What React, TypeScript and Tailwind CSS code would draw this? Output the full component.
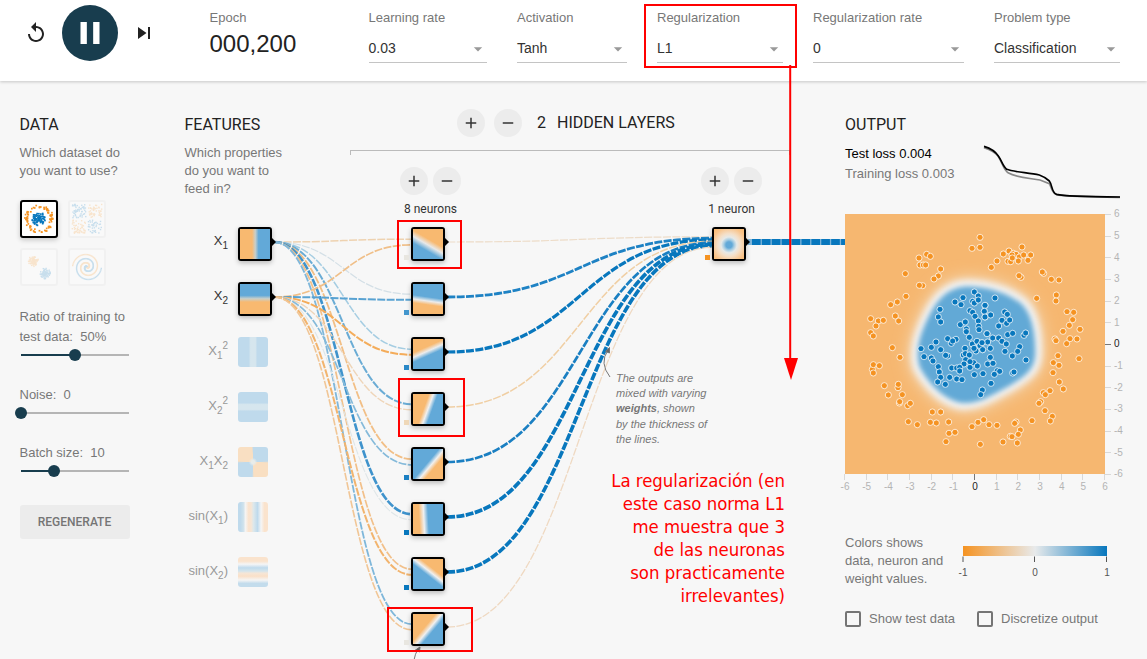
import React from "react";
import { MdReplay, MdPause, MdSkipNext, MdAdd, MdRemove, MdArrowDropDown } from "react-icons/md";

/* ---------- deterministic scatter for the dataset thumbnails ---------- */
function makeRandom(seed: number) {
  let s = seed;
  return () => {
    s = (s * 16807) % 2147483647;
    return s / 2147483647;
  };
}

const ORANGE = "#f59322";
const BLUE = "#0877bd";

type Dot = [number, number, string];

function circleDots(): Dot[] {
  const r = makeRandom(11);
  const out: Dot[] = [];
  for (let i = 0; i < 80; i++) {
    const a = r() * Math.PI * 2;
    const d = 10.8 + r() * 3.6;
    out.push([17 + Math.cos(a) * d, 17 + Math.sin(a) * d, ORANGE]);
  }
  for (let i = 0; i < 80; i++) {
    const a = r() * Math.PI * 2;
    const d = r() * 6.8;
    out.push([17 + Math.cos(a) * d, 17 + Math.sin(a) * d, BLUE]);
  }
  return out;
}

function xorDots(): Dot[] {
  const r = makeRandom(29);
  const out: Dot[] = [];
  for (let i = 0; i < 190; i++) {
    const x = (r() - 0.5) * 27;
    const y = (r() - 0.5) * 27;
    out.push([17 + x + Math.sign(x) * 1.2, 17 + y + Math.sign(y) * 1.2, x * y > 0 ? BLUE : ORANGE]);
  }
  return out;
}

function gaussDots(): Dot[] {
  const r = makeRandom(5);
  const out: Dot[] = [];
  for (let i = 0; i < 170; i++) {
    const a = r() * Math.PI * 2;
    const d = r() * 5.4;
    const c = i < 85 ? 11.5 : 23.5;
    out.push([c + Math.cos(a) * d, c + Math.sin(a) * d, i < 85 ? ORANGE : BLUE]);
  }
  return out;
}

function spiralDots(): Dot[] {
  const out: Dot[] = [];
  for (let i = 0; i < 110; i++) {
    const t = (i / 110) * 1.75 * 2 * Math.PI;
    const d = (i / 110) * 14.5;
    out.push([17 + Math.sin(t) * d, 17 + Math.cos(t) * d, ORANGE]);
    out.push([17 - Math.sin(t) * d, 17 - Math.cos(t) * d, BLUE]);
  }
  return out;
}

function Dataset({ dots, active }: { dots: Dot[]; active?: boolean }) {
  const size = active ? 1.7 : 1.4;
  return (
    <div
      className={
        active
          ? "size-[38px] rounded-[3px] border-2 border-black bg-white shadow-[0_2px_5px_rgba(0,0,0,0.2)]"
          : "size-[38px] rounded-[3px] border-2 border-[#f1f1f1] bg-[#f9f9f9]"
      }
    >
      <svg viewBox="0 0 34 34" className={active ? "size-full" : "size-full opacity-20"}>
        {dots.map(([x, y, c], i) => (
          <rect key={i} x={x - size / 2} y={y - size / 2} width={size} height={size} fill={c} />
        ))}
      </svg>
    </div>
  );
}

/* ---------- header controls ---------- */
function Select({ label, value, width }: { label: string; value: string; width: string }) {
  return (
    <div className={`${width} shrink-0 pt-[10px]`}>
      <div className="text-[13px] leading-4 text-[#777]">{label}</div>
      <div className="mt-[9px] flex h-[28px] items-center justify-between border-b border-[#c4c4c4] text-[14px] text-[#333]">
        <span>{value}</span>
        <MdArrowDropDown size={20} className="-mr-px text-[#999]" />
      </div>
    </div>
  );
}

function RoundButton({ minus }: { minus?: boolean }) {
  return (
    <button className="flex size-7 items-center justify-center rounded-full bg-[#ececec] text-[#333]">
      {minus ? <MdRemove size={18} /> : <MdAdd size={18} />}
    </button>
  );
}

function Slider({ label, pct }: { label: React.ReactNode; pct: number }) {
  return (
    <div>
      <div className="text-[13px] leading-5 text-[#777]">{label}</div>
      <div className="relative ml-px mt-[2px] h-3 w-[108px]">
        <div className="absolute top-[5px] h-[2px] w-full bg-[#b5b5b5]" />
        <div className="absolute top-[5px] h-[2px] bg-[#183d4e]" style={{ width: `${pct}%` }} />
        <div className="absolute -ml-[6px] size-3 rounded-full bg-[#183d4e]" style={{ left: `${pct}%` }} />
      </div>
    </div>
  );
}

/* ---------- network ---------- */
const LEFT = 165;
const TOP = 82;
const rowY = (i: number) => 227 + 55 * i;

const features: { label: React.ReactNode; bg: string; active?: boolean }[] = [
  { label: <>X<sub>1</sub></>, active: true, bg: "bg-[linear-gradient(90deg,#f8b970_40%,#c9cfc9_51%,#62a9d8_62%)]" },
  { label: <>X<sub>2</sub></>, active: true, bg: "bg-[linear-gradient(180deg,#62a9d8_38%,#c9cfc9_49%,#f8b970_60%)]" },
  { label: <>X<sub>1</sub><sup>2</sup></>, bg: "bg-[linear-gradient(90deg,#bfdaec_36%,#d6e6ee_42%,#d6e6ee_58%,#bfdaec_64%)]" },
  { label: <>X<sub>2</sub><sup>2</sup></>, bg: "bg-[linear-gradient(180deg,#bfdaec_36%,#d6e6ee_42%,#d6e6ee_58%,#bfdaec_64%)]" },
  {
    label: <>X<sub>1</sub>X<sub>2</sub></>,
    bg: "bg-[radial-gradient(circle,#e8ecea_0_8%,transparent_20%),conic-gradient(#bfdaec_0_24%,#f9dfc2_26%_49%,#bfdaec_51%_74%,#f9dfc2_76%_99%,#bfdaec)]",
  },
  {
    label: <>sin(X<sub>1</sub>)</>,
    bg: "bg-[linear-gradient(90deg,#bfdaec_8%,#cfe2ec_18%,#f5f4f3_25%,#fae2cc_36%,#f6e6d6_44%,#dce8ec_52%,#bfdaec_65%,#f5f5f5_77%,#fae3cd_88%)]",
  },
  {
    label: <>sin(X<sub>2</sub>)</>,
    bg: "bg-[linear-gradient(180deg,#fae3cd_14%,#f5f5f5_24%,#bfdaec_36%,#d5e5ec_47%,#f6e6d6_54%,#fae0c8_64%,#f5f5f5_77%,#c3dcec_88%)]",
  },
];

const hiddenBg = [
  "bg-[linear-gradient(30deg,#62a9d8_34%,#e8e8e8_48%,#f8b970_61%)]",
  "bg-[linear-gradient(188deg,#62a9d8_44%,#ececec_56%,#f8b970_67%)]",
  "bg-[linear-gradient(156deg,#f8b970_32%,#ececec_43%,#62a9d8_54%)]",
  "bg-[linear-gradient(110deg,#f8b970_39%,#f0f0f0_50%,#62a9d8_61%)]",
  "bg-[linear-gradient(130deg,#62a9d8_47%,#f0f0f0_57%,#f8b970_67%)]",
  "bg-[linear-gradient(87deg,#f8b970_22%,#f0f0f0_37%,#62a9d8_51%)]",
  "bg-[linear-gradient(38deg,#62a9d8_47%,#f0f0f0_57%,#f8b970_67%)]",
  "bg-[linear-gradient(130deg,#f8b970_41%,#f0f0f0_52%,#62a9d8_62%)]",
];
const biasColor = ["#e8e6e0", "#4396cd", "#2a88c7", "#efd8b8", "#1b7fc2", "#0877bd", "#0877bd", "#e8e6e0"];

type Link = [string, number];
const fromX1: Link[] = [
  ["#eed2b0", 1.5], ["#d3dfe6", 1.2], ["#a5cde2", 1.5], ["#6aacd5", 2],
  ["#f2bf86", 1.8], ["#3f93cc", 2.6], ["#f2c08a", 1.7], ["#7fb7da", 1.8],
];
const fromX2: Link[] = [
  ["#f0bf88", 1.7], ["#58a2d2", 2], ["#f4ac5a", 2], ["#efd5b8", 1.4],
  ["#85bada", 1.7], ["#dfe6e8", 1.1], ["#f2b46e", 2], ["#f1c696", 1.6],
];
const toOut: Link[] = [
  ["#eddcc8", 1.2], ["#1e82c4", 2.8], ["#0877bd", 3.2], ["#f0cfa4", 1.5],
  ["#1a7fc2", 2.7], ["#0877bd", 3.7], ["#0877bd", 3.6], ["#efd9c2", 1.3],
];

function diagonal(x0: number, y0: number, x1: number, y1: number) {
  const m = (x0 + x1) / 2;
  return `M${x0},${y0}C${m},${y0} ${m},${y1} ${x1},${y1}`;
}

function Links() {
  return (
    <svg className="absolute inset-0" width="680" height="577" viewBox={`${LEFT} ${TOP} 680 577`} fill="none">
      <g strokeDasharray="8 1.4">
        {fromX1.map(([c, w], i) => (
          <path key={`a${i}`} d={diagonal(274, 242, 412, 239.2 + 55 * i)} stroke={c} strokeWidth={w} />
        ))}
        {fromX2.map(([c, w], i) => (
          <path key={`b${i}`} d={diagonal(274, 297, 412, 244.8 + 55 * i)} stroke={c} strokeWidth={w} />
        ))}
        {toOut.map(([c, w], i) => (
          <path key={`c${i}`} d={diagonal(447, 242 + 55 * i, 713, 242 + ((i - 3.5) / 8) * 12)} stroke={c} strokeWidth={w} />
        ))}
      </g>
      <path d="M748 242H846" stroke="#7db5da" strokeWidth="6" />
      <path d="M752 242H846" stroke={BLUE} strokeWidth="6" strokeDasharray="8.6 1.3" />
      <g stroke="#777" strokeWidth="1">
        <path d="M610 377Q599 363 608 350" />
        <path d="M605.5 351.5L609.5 347.5L609.5 353Z" fill="#666" />
        <path d="M414 660Q415 654 418 649" />
        <path d="M415.5 650L420 647L419.5 652Z" fill="#666" />
      </g>
    </svg>
  );
}

function Node({ x, y, bg, bias }: { x: number; y: number; bg: string; bias?: string }) {
  return (
    <div className="absolute" style={{ left: x - LEFT, top: y - TOP }}>
      {bias && <div className="absolute -left-[7px] top-[28px] size-[5px]" style={{ backgroundColor: bias }} />}
      <div className="size-[34px] rounded-[3px] border-2 border-black bg-black shadow-[0_2px_5px_rgba(0,0,0,0.25)]">
        <div className={`size-full ${bg}`} />
      </div>
      <svg className="absolute left-[33px] top-[11px]" width="5" height="8" viewBox="0 0 5 8">
        <path d="M0 0H1L5 4L1 8H0Z" fill="#000" />
      </svg>
    </div>
  );
}

function Network() {
  return (
    <section className="relative h-[577px] w-[680px] shrink-0">
      <div className="flex">
        <div className="w-[185px] shrink-0 pl-[19.5px] pt-[33px]">
          <h2 className="font-['Roboto'] text-[16px] leading-5 text-[#222]">FEATURES</h2>
          <p className="mt-[9px] w-[110px] text-[13px] leading-[18px] text-[#777]">Which properties do you want to feed in?</p>
        </div>
        <div className="w-[440px] shrink-0">
          <div className="flex items-center pl-[107px] pt-[27px]">
            <RoundButton />
            <div className="w-[9px]" />
            <RoundButton minus />
            <span className="ml-[15px] w-5 font-['Roboto'] text-[16px] leading-5 text-[#222]">2</span>
            <span className="font-['Roboto'] text-[16px] leading-5 text-[#222]">HIDDEN LAYERS</span>
          </div>
          <div className="mt-[13px] h-[5px] border-x border-t border-[#bbb]" />
          <div className="mt-[12px] flex justify-between pl-[50px] pr-[28px]">
            {["8 neurons", "1 neuron"].map((t) => (
              <div key={t} className="w-[61px]">
                <div className="flex justify-between">
                  <RoundButton />
                  <RoundButton minus />
                </div>
                <div className="mt-[6px] whitespace-nowrap text-center font-['Roboto'] text-[12px] leading-4 text-[#333]">{t}</div>
              </div>
            ))}
          </div>
        </div>
      </div>

      <Links />

      {features.map((f, i) => (
        <React.Fragment key={i}>
          <div
            className={
              f.active
                ? "absolute left-0 w-[63px] text-right text-[13px] leading-5 text-[#333] [&_sub]:text-[10px] [&_sub]:leading-none [&_sub]:bottom-[-4px]"
                : "absolute left-0 w-[63px] text-right text-[13px] leading-5 text-[#999] [&_sub]:text-[10px] [&_sub]:leading-none [&_sub]:bottom-[-4px] [&_sup]:text-[10px] [&_sup]:leading-none [&_sup]:top-[-6px]"
            }
            style={{ top: rowY(i) - TOP + 4 }}
          >
            {f.label}
          </div>
          {f.active ? (
            <Node x={238} y={rowY(i)} bg={f.bg} />
          ) : (
            <div className={`absolute size-[30px] rounded-[3px] ${f.bg}`} style={{ left: 238 - LEFT, top: rowY(i) - TOP }} />
          )}
        </React.Fragment>
      ))}

      {hiddenBg.map((bg, i) => (
        <Node key={i} x={411} y={rowY(i)} bg={bg} bias={biasColor[i]} />
      ))}
      <Node
        x={712}
        y={227}
        bias={ORANGE}
        bg="bg-[radial-gradient(circle_at_50%_53%,#62a9d8_0_14%,#a6cce2_24%,#e6e9e8_36%,#f4dfc8_52%,#f8c48c_78%,#f8b970)]"
      />

      <p className="absolute left-[451px] top-[289px] w-[100px] text-[11px] italic leading-[15.2px] text-[#777]">
        The outputs are
        <br />
        mixed with varying
        <br />
        <b>weights</b>, shown
        <br />
        by the thickness of
        <br />
        the lines.
      </p>
    </section>
  );
}

/* ---------- output heat map (drawn in thirds of a pixel) ---------- */
type P = [number, number];
const orangeLeft: P[] = [
  [420, 97], [396, 130], [420, 127], [237, 159], [260, 148], [271, 154], [240, 180], [250, 180], [257, 180], [302, 192],
  [295, 213], [282, 222], [196, 206], [248, 242], [238, 241], [198, 274], [172, 291], [152, 299], [92, 341], [115, 348],
  [130, 346], [108, 363], [166, 333], [176, 348], [92, 383], [100, 393], [157, 428], [180, 457], [97, 493], [100, 479],
  [118, 482], [100, 504], [133, 542], [174, 548], [175, 538], [145, 570], [187, 569], [178, 594], [179, 590], [203, 602],
  [211, 595], [205, 650], [232, 659], [277, 621], [302, 621], [271, 652], [289, 654], [326, 651], [327, 685], [345, 682],
  [318, 710], [396, 665], [414, 652], [431, 644], [421, 718],
];
const orangeRight: P[] = [
  [34, 187], [51, 168], [70, 147], [87, 138], [100, 145], [126, 126], [84, 169], [92, 170], [108, 148], [118, 156],
  [96, 150], [97, 159], [131, 150], [152, 150], [115, 168], [144, 166], [123, 217], [117, 212], [191, 205], [187, 201],
  [214, 223], [237, 225], [170, 280], [229, 270], [228, 288], [261, 320], [281, 322], [278, 344], [268, 361], [249, 379],
  [300, 373], [225, 402], [228, 407], [270, 401], [291, 402], [260, 416], [234, 452], [220, 473], [237, 481], [219, 503],
  [297, 461], [238, 531], [250, 552], [210, 557], [190, 563], [196, 569], [182, 590], [177, 595], [195, 617], [217, 634],
  [211, 648], [156, 647], [108, 651], [104, 655], [121, 675], [115, 688], [91, 694], [96, 695], [69, 711], [112, 714],
  [27, 659], [51, 661],
];
const blueLeft: P[] = [
  [403, 261], [415, 273], [369, 278], [345, 291], [363, 299], [398, 289], [403, 294], [415, 285], [435, 301], [300, 313],
  [295, 336], [302, 351], [390, 317], [398, 322], [405, 334], [433, 319], [435, 336], [361, 359], [376, 351], [415, 348],
  [416, 364], [417, 374], [379, 372], [379, 380], [441, 386], [388, 397], [348, 403], [323, 401], [334, 415], [338, 408],
  [288, 411], [274, 427], [243, 431], [252, 455], [302, 434], [274, 459], [279, 468], [295, 485], [298, 501], [323, 453],
  [317, 451], [375, 430], [370, 450], [376, 446], [388, 450], [397, 417], [411, 409], [414, 429], [426, 413], [408, 438],
  [377, 464], [372, 477], [390, 487], [401, 473], [412, 483], [390, 470], [335, 489], [350, 489], [359, 487], [359, 498],
  [403, 509], [429, 506], [302, 517], [293, 531], [329, 517], [350, 522], [366, 524], [316, 538], [427, 555], [422, 569],
  [428, 434], [402, 430], [420, 422],
];
const blueRight: P[] = [
  [45, 279], [15, 301], [13, 319], [15, 336], [32, 330], [74, 321], [82, 328], [66, 346], [80, 355], [89, 345],
  [56, 363], [21, 386], [83, 389], [98, 385], [132, 391], [137, 384], [38, 399], [56, 399], [23, 411], [66, 409],
  [79, 417], [6, 413], [31, 430], [75, 439], [119, 425], [113, 439], [97, 453], [138, 465], [31, 457], [23, 477],
  [39, 475], [8, 434], [52, 497], [59, 499], [43, 508], [98, 504], [102, 501], [33, 535],
];

function Dots({ pts, dx, fill }: { pts: P[]; dx: number; fill: string }) {
  return (
    <g transform={`translate(${dx} -27)`} fill={fill} stroke="#fff" strokeOpacity="0.75" strokeWidth="3">
      {pts.map(([x, y], i) => (
        <circle key={i} cx={x} cy={y} r="9.2" />
      ))}
    </g>
  );
}

const BLOB =
  "M370 202C440 204 500 226 540 258C575 292 586 350 586 415C586 470 560 490 505 524C450 552 410 584 350 582C290 574 240 520 210 466C194 420 208 360 240 298C270 236 310 202 370 202Z";

function HeatMap() {
  const ticks = Array.from({ length: 13 }, (_, i) => i - 6);
  return (
    <svg className="-ml-[8px] block" width="302" height="286" viewBox="-8 -7 302 286">
      <defs>
        <filter id="halo" x="-40%" y="-40%" width="180%" height="180%"><feGaussianBlur stdDeviation="24" /></filter>
        <filter id="soft" x="-30%" y="-30%" width="160%" height="160%"><feGaussianBlur stdDeviation="9" /></filter>
        <clipPath id="plot"><rect width="780" height="780" /></clipPath>
      </defs>
      <g transform="scale(0.33333)" clipPath="url(#plot)">
        <rect width="780" height="780" fill="#f6b770" />
        <path d={BLOB} fill="#f2d8b6" stroke="#f2d8b6" strokeWidth="24" filter="url(#halo)" />
        <path d={BLOB} fill="#f2f2f2" stroke="#f2f2f2" strokeWidth="10" filter="url(#soft)" />
        <path d={BLOB} fill="#62a9d6" filter="url(#soft)" transform="translate(393 393) scale(0.92) translate(-393 -393)" />
        <Dots pts={orangeLeft} dx={-15} fill="#f59322" />
        <Dots pts={orangeRight} dx={405} fill="#f59322" />
        <Dots pts={blueLeft} dx={-15} fill="#0877bd" />
        <Dots pts={blueRight} dx={405} fill="#0877bd" />
      </g>
      <g className="font-['Liberation_Sans',sans-serif] text-[10px]">
        {ticks.map((t) => {
          const p = ((t + 6) * 260) / 12;
          const zero = t === 0;
          return (
            <g key={t} fill={zero ? "#222" : "#b4b4b4"}>
              <path d={`M${Math.round(p) - 0.5} 260v6M260 ${260.5 - Math.round(p)}h6`} stroke={zero ? "#777" : "#d8d8d8"} />
              <text x={p} y="275.5" textAnchor="middle">{t}</text>
              <text x="269" y={263.3 - p}>{t}</text>
            </g>
          );
        })}
      </g>
    </svg>
  );
}

function Output() {
  return (
    <section className="h-[577px] w-[302px] shrink-0 pt-[33px]">
      <div className="flex h-[91px]">
        <div className="w-[136px] shrink-0">
          <h2 className="font-['Roboto'] text-[16px] leading-5 text-[#222]">OUTPUT</h2>
          <div className="mt-[9px] text-[13px] leading-5 text-black">Test loss 0.004</div>
          <div className="text-[13px] leading-5 text-[#777]">Training loss 0.003</div>
        </div>
        <svg className="mt-[28px]" width="142" height="60" viewBox="603 429 426 180" fill="none" strokeWidth="5">
          <path stroke="#888" d="M612 443C632 450 645 456 654 468C666 486 672 512 684 518C710 533 745 534 780 540L808 551C816 566 816 580 830 584C850 590 900 590 1020 592" />
          <path stroke="#000" d="M612 439C632 445 645 452 655 468C664 480 668 498 680 508C700 516 745 518 778 525C790 529 800 536 808 543C818 556 814 578 830 583C850 588 900 590 1020 591" />
        </svg>
      </div>
      <div className="mt-px">
        <HeatMap />
      </div>
      <div className="mt-[41px] flex">
        <p className="w-[110px] text-[13px] leading-[18px] text-[#777]">
          Colors shows
          <br />
          data, neuron and
          <br />
          weight values.
        </p>
        <svg className="mt-[12px] shrink-0" width="164" height="36" viewBox="-8 0 164 36">
          <defs>
            <linearGradient id="scale">
              <stop offset="0" stopColor="#f59322" />
              <stop offset="0.5" stopColor="#e8eaeb" />
              <stop offset="1" stopColor="#0877bd" />
            </linearGradient>
          </defs>
          <rect width="144" height="10" fill="url(#scale)" />
          <path d="M0 10.5v5.5M71.5 10.5v5.5M143.5 10.5v5.5" stroke="#555" />
          <g className="font-['Liberation_Sans',sans-serif] text-[10px]" fill="#555" textAnchor="middle">
            <text x="0" y="29.5">-1</text>
            <text x="72" y="29.5">0</text>
            <text x="144" y="29.5">1</text>
          </g>
        </svg>
      </div>
      <div className="mt-[21px] flex items-center text-[13px] leading-5 text-[#777]">
        <span className="size-4 rounded-[2px] border-2 border-[#757575]" />
        <span className="ml-[8px] w-[108px]">Show test data</span>
        <span className="size-4 rounded-[2px] border-2 border-[#757575]" />
        <span className="ml-[8px]">Discretize output</span>
      </div>
    </section>
  );
}

/* ---------- hand-drawn markup above the page ---------- */
function Markup() {
  return (
    <>
      <div className="absolute left-[644px] top-[4px] h-[64px] w-[153px] border-2 border-[#f00]" />
      <div className="absolute left-[397px] top-[220px] h-[49px] w-[65px] border-2 border-[#f00]" />
      <div className="absolute left-[398px] top-[378px] h-[59px] w-[67px] border-2 border-[#f00]" />
      <div className="absolute left-[387px] top-[607px] h-[45px] w-[86px] border-2 border-[#f00]" />
      <svg className="absolute left-[783px] top-[65px]" width="16" height="316" viewBox="0 0 16 316">
        <path d="M7.2 0V296" stroke="#f00" strokeWidth="2" />
        <path d="M1 293H15L8 315Z" fill="#f00" />
      </svg>
      <p className="absolute right-[362px] top-[469px] whitespace-nowrap text-right font-['DejaVu_Sans_Condensed','Noto_Sans',sans-serif] text-[18.4px] leading-[23px] text-[#f00]">
        La regularización (en
        <br />
        este caso norma L1
        <br />
        me muestra que 3
        <br />
        de las neuronas
        <br />
        son practicamente
        <br />
        irrelevantes)
      </p>
    </>
  );
}

export default function App() {
  return (
    <div className="relative h-[659px] w-[1147px] overflow-hidden bg-[#f7f7f7] font-['Liberation_Sans',Arial,sans-serif]">
      <header className="relative flex h-[81px] bg-white shadow-[0_1px_3px_rgba(0,0,0,0.2)]">
        <div className="flex h-[66px] w-[209.5px] shrink-0 items-center pl-[23.5px] text-[#222]">
          <MdReplay size={24} />
          <div className="ml-[14.5px] flex size-14 items-center justify-center rounded-full bg-[#183d4e] text-white">
            <MdPause size={38} />
          </div>
          <MdSkipNext size={24} className="ml-[13.5px]" />
        </div>
        <div className="w-[159px] shrink-0 pt-[10px]">
          <div className="text-[13px] leading-4 text-[#777]">Epoch</div>
          <div className="mt-[4px] text-[24px] leading-7 text-[#222]">000,200</div>
        </div>
        <div className="flex gap-[30px]">
          <Select label="Learning rate" value="0.03" width="w-[118.5px]" />
          <Select label="Activation" value="Tanh" width="w-[110px]" />
          <Select label="Regularization" value="L1" width="w-[126px]" />
          <Select label="Regularization rate" value="0" width="w-[151px]" />
          <Select label="Problem type" value="Classification" width="w-[126px]" />
        </div>
      </header>
      <main className="flex pt-px">
        <aside className="w-[165px] shrink-0 pl-[19.5px] pt-[33px]">
          <h2 className="font-['Roboto'] text-[16px] leading-5 text-[#222]">DATA</h2>
          <p className="mt-[9px] w-[112px] text-[13px] leading-[18px] text-[#777]">Which dataset do you want to use?</p>
          <div className="mt-[20px] grid w-[86px] grid-cols-2 gap-[10px]">
            <Dataset dots={circleDots()} active />
            <Dataset dots={xorDots()} />
            <Dataset dots={gaussDots()} />
            <Dataset dots={spiralDots()} />
          </div>
          <div className="mt-[21px] flex flex-col gap-[24px]">
            <Slider label={<>Ratio of training to<br />test data:&nbsp; 50%</>} pct={50} />
            <Slider label={<>Noise:&nbsp; 0</>} pct={0} />
            <Slider label={<>Batch size:&nbsp; 10</>} pct={31} />
          </div>
          <button className="mt-[28px] h-[34px] w-[110px] rounded-[3px] bg-[#ececec] font-['Roboto'] text-[12px] font-medium text-[#757575]">
            REGENERATE
          </button>
        </aside>
        <Network />
        <Output />
      </main>
      <Markup />
    </div>
  );
}
